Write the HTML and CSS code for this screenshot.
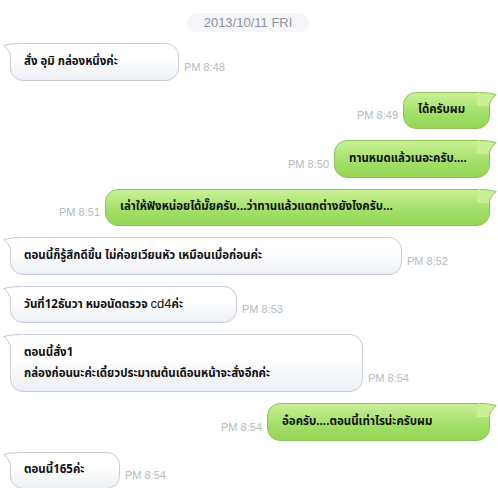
FILE: index.html
```html
<!DOCTYPE html>
<html lang="th">
<head>
<meta charset="utf-8">
<link rel="stylesheet" href="styles.css">
</head>
<body>
<div class="chat">
  <div class="date-row"><span class="date-pill">2013/10/11 FRI</span></div>

  <div class="row left">
    <div class="bubble white w1"><svg class="tail" viewBox="0 0 20 14"><path class="tf" d="M16 1 Q8 1 0.8 2.5 Q5 6 8 11 L8 14 L20 14 L20 1 Z"/><path class="ts" d="M17 0.5 Q8 0.5 0.8 2.5 Q5 6 7.5 11.5"/></svg><p>สั่ง อุมิ กล่องหนึ่งค่ะ</p></div>
    <span class="time">PM 8:48</span>
  </div>

  <div class="row right">
    <span class="time">PM 8:49</span>
    <div class="bubble green w2"><svg class="tail" viewBox="0 0 20 14"><path class="tf" d="M4 1 Q12 1 19.2 2.5 Q15 6 12 11 L12 14 L0 14 L0 1 Z"/><path class="ts" d="M3 0.5 Q12 0.5 19.2 2.5 Q15 6 12.5 11.5"/></svg><p>ได้ครับผม</p></div>
  </div>

  <div class="row right">
    <span class="time">PM 8:50</span>
    <div class="bubble green w3"><svg class="tail" viewBox="0 0 20 14"><path class="tf" d="M4 1 Q12 1 19.2 2.5 Q15 6 12 11 L12 14 L0 14 L0 1 Z"/><path class="ts" d="M3 0.5 Q12 0.5 19.2 2.5 Q15 6 12.5 11.5"/></svg><p>ทานหมดแล้วเนอะครับ....</p></div>
  </div>

  <div class="row right">
    <span class="time">PM 8:51</span>
    <div class="bubble green w4"><svg class="tail" viewBox="0 0 20 14"><path class="tf" d="M4 1 Q12 1 19.2 2.5 Q15 6 12 11 L12 14 L0 14 L0 1 Z"/><path class="ts" d="M3 0.5 Q12 0.5 19.2 2.5 Q15 6 12.5 11.5"/></svg><p>เล่าให้ฟังหน่อยได้มั๊ยครับ...ว่าทานแล้วแตกต่างยังไงครับ...</p></div>
  </div>

  <div class="row left">
    <div class="bubble white w5"><svg class="tail" viewBox="0 0 20 14"><path class="tf" d="M16 1 Q8 1 0.8 2.5 Q5 6 8 11 L8 14 L20 14 L20 1 Z"/><path class="ts" d="M17 0.5 Q8 0.5 0.8 2.5 Q5 6 7.5 11.5"/></svg><p>ตอนนี้ก็รู้สึกดีขึ้น ไม่ค่อยเวียนหัว เหมือนเมื่อก่อนค่ะ</p></div>
    <span class="time">PM 8:52</span>
  </div>

  <div class="row left">
    <div class="bubble white w6"><svg class="tail" viewBox="0 0 20 14"><path class="tf" d="M16 1 Q8 1 0.8 2.5 Q5 6 8 11 L8 14 L20 14 L20 1 Z"/><path class="ts" d="M17 0.5 Q8 0.5 0.8 2.5 Q5 6 7.5 11.5"/></svg><p>วันที่12ธันวา หมอนัดตรวจ <span class="latin">cd4</span>ค่ะ</p></div>
    <span class="time">PM 8:53</span>
  </div>

  <div class="row left">
    <div class="bubble white w7"><svg class="tail" viewBox="0 0 20 14"><path class="tf" d="M16 1 Q8 1 0.8 2.5 Q5 6 8 11 L8 14 L20 14 L20 1 Z"/><path class="ts" d="M17 0.5 Q8 0.5 0.8 2.5 Q5 6 7.5 11.5"/></svg><p>ตอนนี้สั่ง1</p><p>กล่องก่อนนะค่ะเดี๋ยวประมาณต้นเดือนหน้าจะสั่งอีกค่ะ</p></div>
    <span class="time">PM 8:54</span>
  </div>

  <div class="row right">
    <span class="time">PM 8:54</span>
    <div class="bubble green w8"><svg class="tail" viewBox="0 0 20 14"><path class="tf" d="M4 1 Q12 1 19.2 2.5 Q15 6 12 11 L12 14 L0 14 L0 1 Z"/><path class="ts" d="M3 0.5 Q12 0.5 19.2 2.5 Q15 6 12.5 11.5"/></svg><p>อ๋อครับ....ตอนนี้เท่าไรน่ะครับผม</p></div>
  </div>

  <div class="row left">
    <div class="bubble white w9"><svg class="tail" viewBox="0 0 20 14"><path class="tf" d="M16 1 Q8 1 0.8 2.5 Q5 6 8 11 L8 14 L20 14 L20 1 Z"/><path class="ts" d="M17 0.5 Q8 0.5 0.8 2.5 Q5 6 7.5 11.5"/></svg><p>ตอนนี้165ค่ะ</p></div>
    <span class="time">PM 8:54</span>
  </div>
</div>
</body>
</html>
```

FILE: styles.css
```css
html, body {
  margin: 0;
  padding: 0;
  background: #ffffff;
}

.chat {
  width: 498px;
  padding: 13px 0 0 0;
  box-sizing: border-box;
  display: flex;
  flex-direction: column;
  gap: 11px;
  font-family: "Noto Sans Thai", "Loma", "Garuda", "Tlwg Typo", "DejaVu Sans", sans-serif;
}

.date-row {
  display: flex;
  justify-content: center;
}

.date-pill {
  display: inline-block;
  box-sizing: border-box;
  width: 122px;
  height: 19px;
  line-height: 19px;
  text-align: center;
  border-radius: 10px;
  background: #f5f6f9;
  color: #8e939d;
  font-family: "Liberation Sans", Arial, sans-serif;
  font-size: 13px;
  margin-left: -2px;
}

.row {
  display: flex;
  align-items: flex-end;
  gap: 5px;
}

.row.left {
  padding-left: 10px;
}

.row.right {
  justify-content: flex-end;
  padding-right: 8px;
}

.time {
  font-family: "Liberation Sans", Arial, sans-serif;
  font-size: 11px;
  color: #b6bac2;
  padding-bottom: 8px;
  white-space: nowrap;
}

.bubble {
  position: relative;
  box-sizing: border-box;
  min-height: 37.5px;
  border-radius: 13px;
  padding: 8px 10px 8px 13px;
  display: flex;
  flex-direction: column;
  justify-content: center;
  gap: 3px;
}

.bubble p {
  margin: 0;
  font-size: 11.5px;
  font-weight: bold;
  line-height: 18px;
  color: #111111;
  white-space: nowrap;
}

.bubble .latin {
  font-family: "Liberation Sans", Arial, sans-serif;
  font-weight: normal;
  font-size: 13px;
}

.white {
  border: 1px solid #c9cdd6;
  background: linear-gradient(#ffffff, #ffffff 40%, #eceff4);
}

.green {
  border: 1px solid #8cc25a;
  background: linear-gradient(#c9f095, #a4e06a 55%, #93d656);
  padding-left: 14px;
}

.tail {
  position: absolute;
  top: -1px;
  width: 20px;
  height: 14px;
  overflow: visible;
}

.tail .ts {
  fill: none;
  stroke-width: 1;
}

.white .tail {
  left: -8px;
}

.white .tail .tf {
  fill: #ffffff;
}

.white .tail .ts {
  stroke: #c3c8d2;
}

.green .tail {
  right: -8px;
}

.green .tail .tf {
  fill: #c9f095;
}

.green .tail .ts {
  stroke: #8cc25a;
}

.w1 { width: 169px; }
.w2 { width: 87px; }
.w3 { width: 156px; }
.w4 { width: 385px; }
.w5 { width: 392px; }
.w6 { width: 227px; }
.w7 { width: 353px; min-height: 58px; }
.w8 { width: 223px; }
.w9 { width: 110px; }
```
